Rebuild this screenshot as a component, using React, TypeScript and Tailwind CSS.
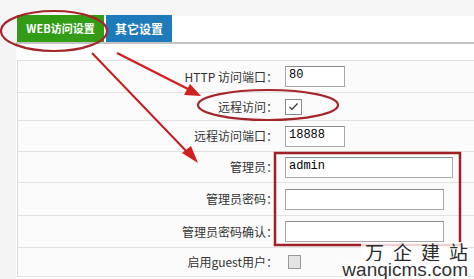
import React from "react";

const font = { fontFamily: '"Noto Sans CJK SC", "Noto Sans", sans-serif' };

function Row({ h, label, children }: { h: string; label: string; children?: React.ReactNode }) {
  return (
    <div className={`flex items-center border-b border-[#e2e2e2] ${h}`}>
      <div className="w-[261px] pr-[1px] text-right text-[12px] text-[#333]">{label}</div>
      <div className="pl-[6px] flex items-center">{children}</div>
    </div>
  );
}

function Input({ w, value }: { w: string; value?: string }) {
  return (
    <div
      className={`${w} h-[21px] border border-[#a8a8a8] border-t-[#8a8a8a] bg-white pl-[3px] text-[12px] leading-[16px] text-black`}
      style={{ fontFamily: '"Liberation Mono", "DejaVu Sans Mono", monospace' }}
    >
      {value}
    </div>
  );
}

export default function App() {
  return (
    <div className="relative w-[474px] h-[279px] overflow-hidden bg-white" style={font}>
      <div className="h-[16px] bg-[#f6f6f6]" />
      <div className="flex">
        <div className="w-[16px] h-[263px] bg-[#f4f4f4]" />
        <div className="flex-1">
          <div className="flex items-end h-[28px] pl-[1px] border-b-2 border-[#c4c4c4]">
            <div className="w-[87px] h-[27px] bg-[#339c16] flex items-center justify-center text-white text-[11px] font-bold">
              WEB访问设置
            </div>
            <div className="ml-[2px] w-[66px] h-[27px] bg-[#1e7ab8] flex items-center justify-center text-white text-[12px] font-bold">
              其它设置
            </div>
          </div>
          <div className="h-[16px]" />
          <div className="ml-[1px] border-l border-t border-[#dcdcdc] bg-[#fbfbfb]">
            <Row h="h-[32px]" label="HTTP 访问端口：">
              <Input w="w-[60px]" value="80" />
            </Row>
            <Row h="h-[28px]" label="远程访问：">
              <div className="w-[17px] h-[16px] border border-[#8a8a8a] bg-white flex items-center justify-center">
                <svg width="11" height="10" viewBox="0 0 11 10">
                  <path d="M1.5 5 L4 7.5 L9.5 1.5" fill="none" stroke="#333" strokeWidth="1.2" />
                </svg>
              </div>
            </Row>
            <Row h="h-[31px]" label="远程访问端口：">
              <Input w="w-[60px]" value="18888" />
            </Row>
            <Row h="h-[31px]" label="管理员：">
              <Input w="w-[168px]" value="admin" />
            </Row>
            <Row h="h-[33px]" label="管理员密码：">
              <Input w="w-[159px]" />
            </Row>
            <Row h="h-[32px]" label="管理员密码确认：">
              <Input w="w-[159px]" />
            </Row>
            <Row h="h-[29px]" label="启用guest用户：">
              <div className="ml-[3px] w-[13px] h-[14px] border border-[#999] bg-[#e4e4e4]" />
            </Row>
          </div>
        </div>
      </div>

      {/* annotations */}
      <svg className="absolute left-0 top-0" width="474" height="279" viewBox="0 0 474 279">
        <ellipse cx="54" cy="31" rx="53" ry="20" fill="none" stroke="#a3262b" strokeWidth="2.2" />
        <ellipse cx="268" cy="105" rx="70" ry="15" fill="none" stroke="#a3262b" strokeWidth="2.2" />
        <rect x="275" y="153" width="185" height="92" fill="none" stroke="#9e1f24" strokeWidth="2.5" />
        <line x1="92" y1="53" x2="190" y2="155" stroke="#c41d1d" strokeWidth="2" />
        <polygon points="198,163 182,153 191,146" fill="#d01f1f" />
        <line x1="117" y1="53" x2="190" y2="90" stroke="#d01f1f" strokeWidth="2.5" />
        <polygon points="201,96 184,95 190,84" fill="#d01f1f" />
      </svg>

      <div className="absolute left-[334px] top-[242px] w-[140px] flex flex-col items-end pr-[6px]">
        <div className="h-[19px] flex gap-[9px] pl-[4px] text-[19px] leading-[19px] text-[#2a2a2a] bg-white/80">
          <span>万</span>
          <span>企</span>
          <span>建</span>
          <span>站</span>
        </div>
        <div className="h-[18px] text-[19px] leading-[18px] text-[#333] bg-white/80" style={{ fontFamily: '"Liberation Sans", Arial, sans-serif' }}>
          wanqicms.com
        </div>
      </div>
    </div>
  );
}
